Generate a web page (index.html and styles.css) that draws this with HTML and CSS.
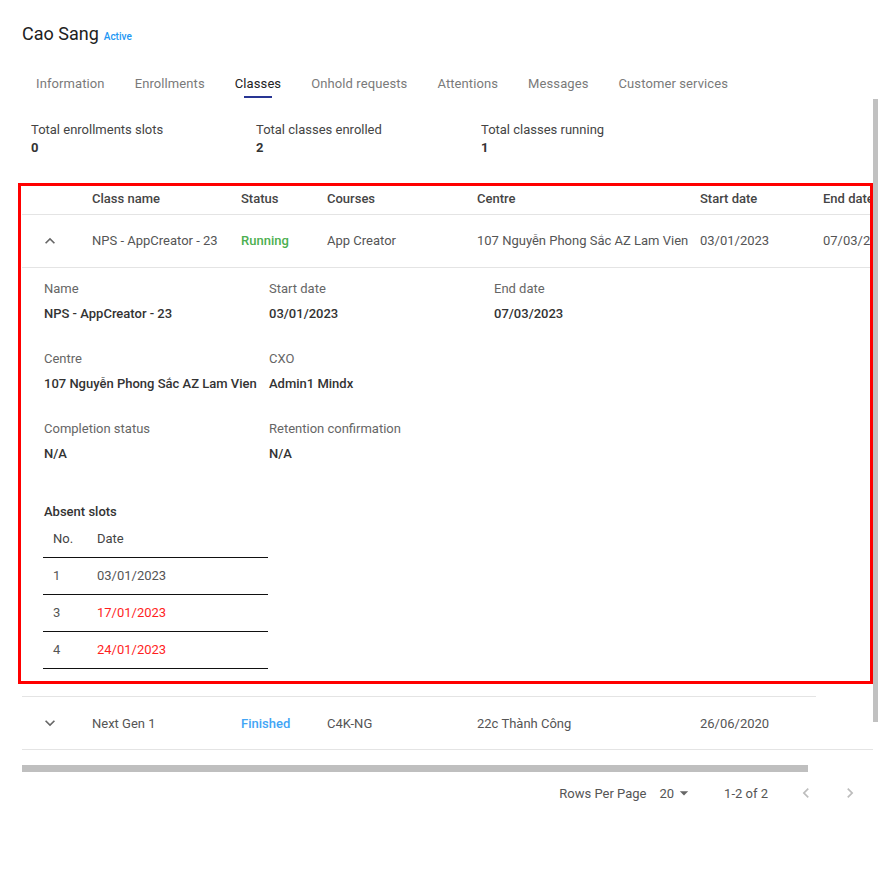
FILE: index.html
```html
<!DOCTYPE html>
<html lang="en">
<head>
<meta charset="utf-8">
<title>Cao Sang - Classes</title>
<link rel="stylesheet" href="styles.css">
</head>
<body>
<div class="page">
  <header class="title-row">
    <h1 class="title">Cao Sang</h1>
    <span class="badge">Active</span>
  </header>

  <nav class="tabs">
    <div class="tab">Information<span class="tab-bar"></span></div>
    <div class="tab">Enrollments<span class="tab-bar"></span></div>
    <div class="tab active">Classes<span class="tab-bar"></span></div>
    <div class="tab">Onhold requests<span class="tab-bar"></span></div>
    <div class="tab">Attentions<span class="tab-bar"></span></div>
    <div class="tab">Messages<span class="tab-bar"></span></div>
    <div class="tab">Customer services<span class="tab-bar"></span></div>
  </nav>

  <section class="content">
    <div class="stats">
      <div class="stat"><div class="stat-label">Total enrollments slots</div><div class="stat-value">0</div></div>
      <div class="stat"><div class="stat-label">Total classes enrolled</div><div class="stat-value">2</div></div>
      <div class="stat"><div class="stat-label">Total classes running</div><div class="stat-value">1</div></div>
    </div>

    <div class="table-wrap">
      <table class="grid">
        <colgroup>
          <col class="c0"><col class="c1"><col class="c2"><col class="c3"><col class="c4"><col class="c5"><col class="c6"><col class="c7">
        </colgroup>
        <thead>
          <tr>
            <th></th>
            <th>Class name</th>
            <th>Status</th>
            <th>Courses</th>
            <th>Centre</th>
            <th>Start date</th>
            <th>End date</th>
            <th>Actions</th>
          </tr>
        </thead>
        <tbody>
          <tr class="row">
            <td class="toggle">
              <svg class="chev" viewBox="0 0 24 24" width="20" height="20"><path d="M12 8l-6 6 1.41 1.41L12 10.83l4.59 4.58L18 14z"/></svg>
            </td>
            <td>NPS - AppCreator - 23</td>
            <td class="running">Running</td>
            <td>App Creator</td>
            <td>107 Nguyễn Phong Sắc AZ Lam Vien</td>
            <td>03/01/2023</td>
            <td>07/03/2023</td>
            <td></td>
          </tr>
          <tr class="detail-row">
            <td class="detail" colspan="6">
              <div class="fields">
                <div class="field"><div class="f-label">Name</div><div class="f-value">NPS - AppCreator - 23</div></div>
                <div class="field"><div class="f-label">Start date</div><div class="f-value">03/01/2023</div></div>
                <div class="field"><div class="f-label">End date</div><div class="f-value">07/03/2023</div></div>
                <div class="field"><div class="f-label">Centre</div><div class="f-value">107 Nguyễn Phong Sắc AZ Lam Vien</div></div>
                <div class="field"><div class="f-label">CXO</div><div class="f-value">Admin1 Mindx</div></div>
                <div class="field"></div>
                <div class="field"><div class="f-label">Completion status</div><div class="f-value">N/A</div></div>
                <div class="field"><div class="f-label">Retention confirmation</div><div class="f-value">N/A</div></div>
              </div>
              <div class="absent-title">Absent slots</div>
              <table class="absent">
                <colgroup><col class="a0"><col class="a1"></colgroup>
                <thead><tr><th>No.</th><th>Date</th></tr></thead>
                <tbody>
                  <tr><td>1</td><td>03/01/2023</td></tr>
                  <tr><td>3</td><td class="late">17/01/2023</td></tr>
                  <tr><td>4</td><td class="late">24/01/2023</td></tr>
                </tbody>
              </table>
            </td>
            <td class="detail-rest" colspan="2"></td>
          </tr>
          <tr class="row">
            <td class="toggle">
              <svg class="chev" viewBox="0 0 24 24" width="20" height="20"><path d="M16.59 8.59L12 13.17 7.41 8.59 6 10l6 6 6-6z"/></svg>
            </td>
            <td>Next Gen 1</td>
            <td class="finished">Finished</td>
            <td>C4K-NG</td>
            <td>22c Thành Công</td>
            <td>26/06/2020</td>
            <td></td>
            <td></td>
          </tr>
        </tbody>
      </table>
    </div>

    <div class="hscroll"></div>

    <div class="pagination">
      <span class="rpp">Rows Per Page</span>
      <span class="select">20
        <svg class="drop" viewBox="0 0 24 24" width="20" height="20"><path d="M7 10l5 5 5-5z"/></svg>
      </span>
      <span class="range">1-2 of 2</span>
      <span class="pg-btn">
        <svg viewBox="0 0 24 24" width="20" height="20"><path d="M15.41 7.41L14 6l-6 6 6 6 1.41-1.41L10.83 12z"/></svg>
      </span>
      <span class="pg-btn">
        <svg viewBox="0 0 24 24" width="20" height="20"><path d="M10 6L8.59 7.41 13.17 12l-4.58 4.59L10 18l6-6z"/></svg>
      </span>
    </div>

    <div class="vthumb"></div>
    <div class="highlight"></div>
  </section>
</div>
</body>
</html>
```

FILE: styles.css
```css
* { box-sizing: border-box; }

html, body {
  margin: 0;
  padding: 0;
  background: #fff;
}

body {
  font-family: Roboto, "Noto Sans", "Liberation Sans", sans-serif;
  font-size: 13px;
  color: #555;
}

.page {
  padding: 22px 0 40px 22px;
  width: 883px;
}

/* title */
.title-row {
  display: flex;
  align-items: baseline;
  gap: 5px;
  height: 24px;
}
.title {
  margin: 0;
  font-size: 18px;
  line-height: 24px;
  font-weight: 400;
  color: #212121;
}
.badge {
  font-size: 10px;
  font-weight: 500;
  color: #2196f3;
}

/* tabs */
.tabs {
  display: flex;
  margin-top: 19px;
  margin-left: -1px;
}
.tab {
  padding: 11px 15px 0;
  line-height: 16px;
  font-size: 13px;
  color: #7a7a7a;
  letter-spacing: 0.1px;
  display: flex;
  flex-direction: column;
  align-items: center;
}
.tab.active {
  color: #222;
}
.tab-bar {
  display: block;
  width: 28px;
  height: 2px;
  margin-top: 4px;
  background: transparent;
}
.tab.active .tab-bar {
  background: #283593;
}

/* content */
.content {
  position: relative;
  width: 856px;
}

.stats {
  display: grid;
  grid-template-columns: 225px 225px 225px;
  padding: 24px 0 0 9px;
  margin-bottom: 27px;
}
.stat-label {
  line-height: 16px;
  color: #444;
}
.stat-value {
  margin-top: 2px;
  line-height: 16px;
  font-weight: 700;
  color: #333;
}

.table-wrap {
  width: 851px;
  overflow: hidden;
}

.grid {
  table-layout: fixed;
  border-collapse: collapse;
  width: 1017px;
}
.c0 { width: 63px; }
.c1 { width: 149px; }
.c2 { width: 86px; }
.c3 { width: 150px; }
.c4 { width: 223px; }
.c5 { width: 123px; }
.c6 { width: 123px; }
.c7 { width: 100px; }

.grid > thead th {
  height: 31px;
  padding: 0 7px;
  text-align: left;
  font-weight: 500;
  color: #454545;
  border-bottom: 1px solid #e4e4e4;
  white-space: nowrap;
  overflow: hidden;
}

.row > td {
  height: 53px;
  padding: 0 7px;
  border-bottom: 1px solid #e4e4e4;
  white-space: nowrap;
  overflow: hidden;
  color: #555;
}
.row > td.toggle {
  padding: 0;
}
.chev {
  display: block;
  margin: 0 0 0 18px;
  fill: #666;
}
.row > td.running {
  color: #4caf50;
  font-weight: 500;
}
.row > td.finished {
  color: #42a5f5;
  font-weight: 500;
}

.detail-row > td {
  vertical-align: top;
}
.detail {
  padding: 13px 0 27px 22px;
  border-bottom: 1px solid #e4e4e4;
}
.detail-rest {
  border-bottom: none;
}

.fields {
  display: grid;
  grid-template-columns: 225px 225px 225px;
}
.field {
  height: 70px;
}
.f-label {
  line-height: 16px;
  color: #666;
  white-space: nowrap;
}
.f-value {
  margin-top: 9px;
  line-height: 16px;
  font-weight: 500;
  color: #333;
  white-space: nowrap;
}

.absent-title {
  margin-top: 13px;
  line-height: 16px;
  font-weight: 500;
  color: #333;
}

.absent {
  border-collapse: collapse;
  table-layout: fixed;
  width: 225px;
  margin-left: -1px;
}
.a0 { width: 44px; }
.a1 { width: 181px; }
.absent th {
  height: 38px;
  padding: 0 10px;
  text-align: left;
  font-weight: 400;
  color: #444;
  border-bottom: 1px solid #111;
}
.absent td {
  height: 37px;
  padding: 0 10px 1px;
  color: #555;
  border-bottom: 1px solid #111;
}
.absent td.late {
  color: #ff1f1f;
}

.hscroll {
  margin-top: 15px;
  width: 786px;
  height: 7px;
  background: #bfbfbf;
}

.pagination {
  display: flex;
  align-items: center;
  justify-content: flex-end;
  width: 851px;
  height: 20px;
  margin-top: 11px;
  padding-right: 11px;
  color: #555;
}
.rpp {
  margin-right: 13px;
}
.select {
  display: flex;
  align-items: center;
  margin-right: 30px;
}
.drop {
  fill: #666;
}
.range {
  margin-right: 26px;
}
.pg-btn {
  display: flex;
  justify-content: center;
  width: 24px;
}
.pg-btn + .pg-btn {
  margin-left: 20px;
}
.pg-btn svg {
  fill: #bdbdbd;
}

/* overlays */
.vthumb {
  position: absolute;
  top: 1px;
  right: 0;
  width: 5px;
  height: 623px;
  background: #c1c1c1;
}
.highlight {
  position: absolute;
  top: 85px;
  left: -4px;
  width: 855px;
  height: 501px;
  border: 3px solid #ff0000;
  pointer-events: none;
}
```
